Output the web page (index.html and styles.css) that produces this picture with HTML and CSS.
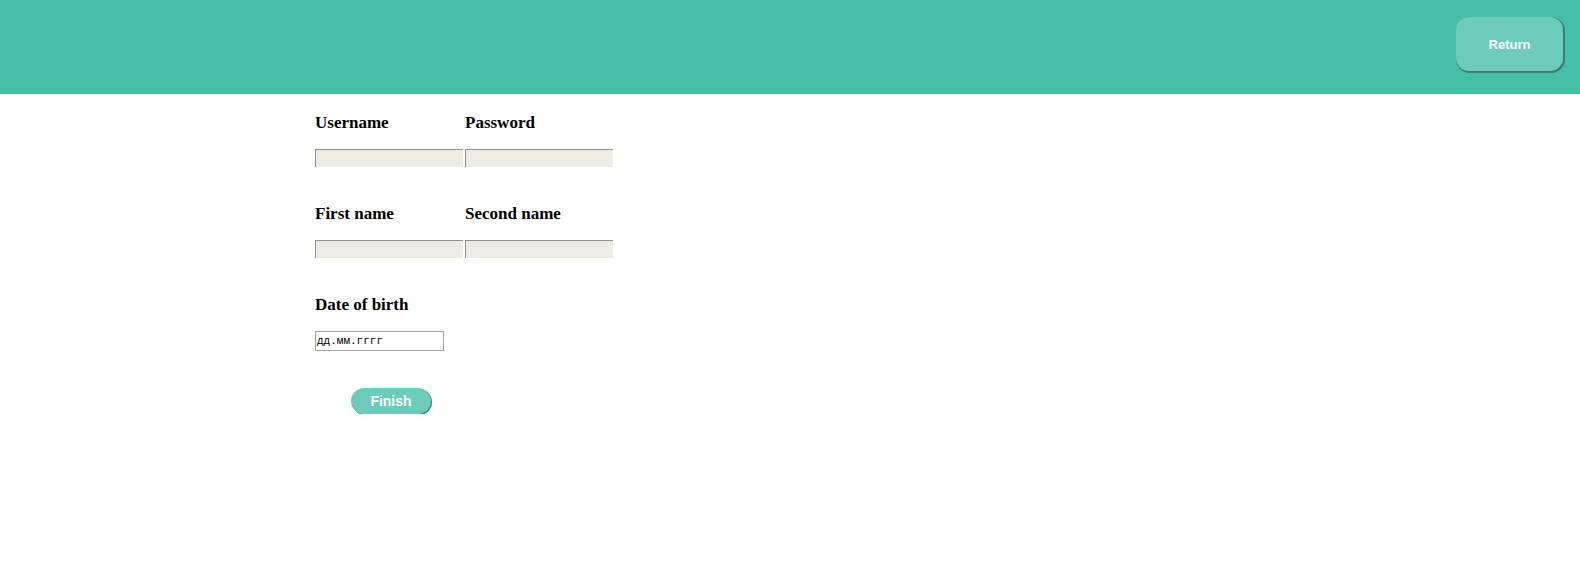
FILE: index.html
```html
<!DOCTYPE html>
<html>
<head>
<meta charset="utf-8">
<link rel="stylesheet" href="styles.css">
</head>
<body>
<header class="topbar">
  <button class="return-btn">Return</button>
</header>
<main class="form">
  <div class="row">
    <div class="field">
      <label class="label">Username</label>
      <input class="text-input" type="text">
    </div>
    <div class="field">
      <label class="label">Password</label>
      <input class="text-input" type="password">
    </div>
  </div>
  <div class="row">
    <div class="field">
      <label class="label">First name</label>
      <input class="text-input" type="text">
    </div>
    <div class="field">
      <label class="label">Second name</label>
      <input class="text-input" type="text">
    </div>
  </div>
  <div class="row">
    <div class="field">
      <label class="label">Date of birth</label>
      <div class="date-input">дд.мм.гггг</div>
    </div>
  </div>
  <div class="actions">
    <button class="finish-btn">Finish</button>
  </div>
</main>
</body>
</html>
```
FILE: styles.css
```css
html, body {
  margin: 0;
  padding: 0;
  background: #ffffff;
  font-family: "Liberation Serif", "Times New Roman", serif;
}
.topbar {
  height: 94px;
  background: #47bea8;
  display: flex;
  justify-content: flex-end;
  align-items: flex-start;
  padding: 17px 17px 0 0;
  box-sizing: border-box;
}
.return-btn {
  width: 107px;
  height: 54px;
  background: #6ccbb9;
  border: none;
  border-radius: 13px;
  box-shadow: 1px 1px 0 1px #3e7d70;
  color: #ffffff;
  font-family: "Liberation Sans", Arial, sans-serif;
  font-weight: bold;
  font-size: 13px;
  padding: 0;
}
.form {
  padding: 0 0 0 315px;
  display: flex;
  flex-direction: column;
}
.row {
  display: flex;
  gap: 2px;
  margin-top: 18px;
}
.row + .row {
  margin-top: 36px;
}
.field {
  display: flex;
  flex-direction: column;
  width: 148px;
}
.label {
  font-weight: bold;
  font-size: 17px;
  line-height: 22px;
  color: #000;
  margin-bottom: 15px;
}
.text-input {
  width: 148px;
  height: 18px;
  box-sizing: border-box;
  background: #ecebe6;
  border: none;
  border-top: 1px solid #8f8f8f;
  border-left: 1px solid #8f8f8f;
  margin: 0;
  padding: 0;
}
.date-input {
  width: 129px;
  height: 20px;
  box-sizing: border-box;
  border: 1px solid #a3a3a3;
  font-family: "Liberation Mono", "DejaVu Sans Mono", monospace;
  font-size: 11px;
  line-height: 18px;
  padding-left: 1px;
  color: #000;
}
.actions {
  padding-left: 36px;
  margin-top: 37px;
}
.finish-btn {
  width: 80px;
  height: 26px;
  background: #6ccbb9;
  border: none;
  border-radius: 13px;
  box-shadow: 1px 1px 0 0 #3e7d70;
  color: #fff;
  font-family: "Liberation Sans", Arial, sans-serif;
  font-weight: bold;
  font-size: 14px;
  padding: 0;
}
```
